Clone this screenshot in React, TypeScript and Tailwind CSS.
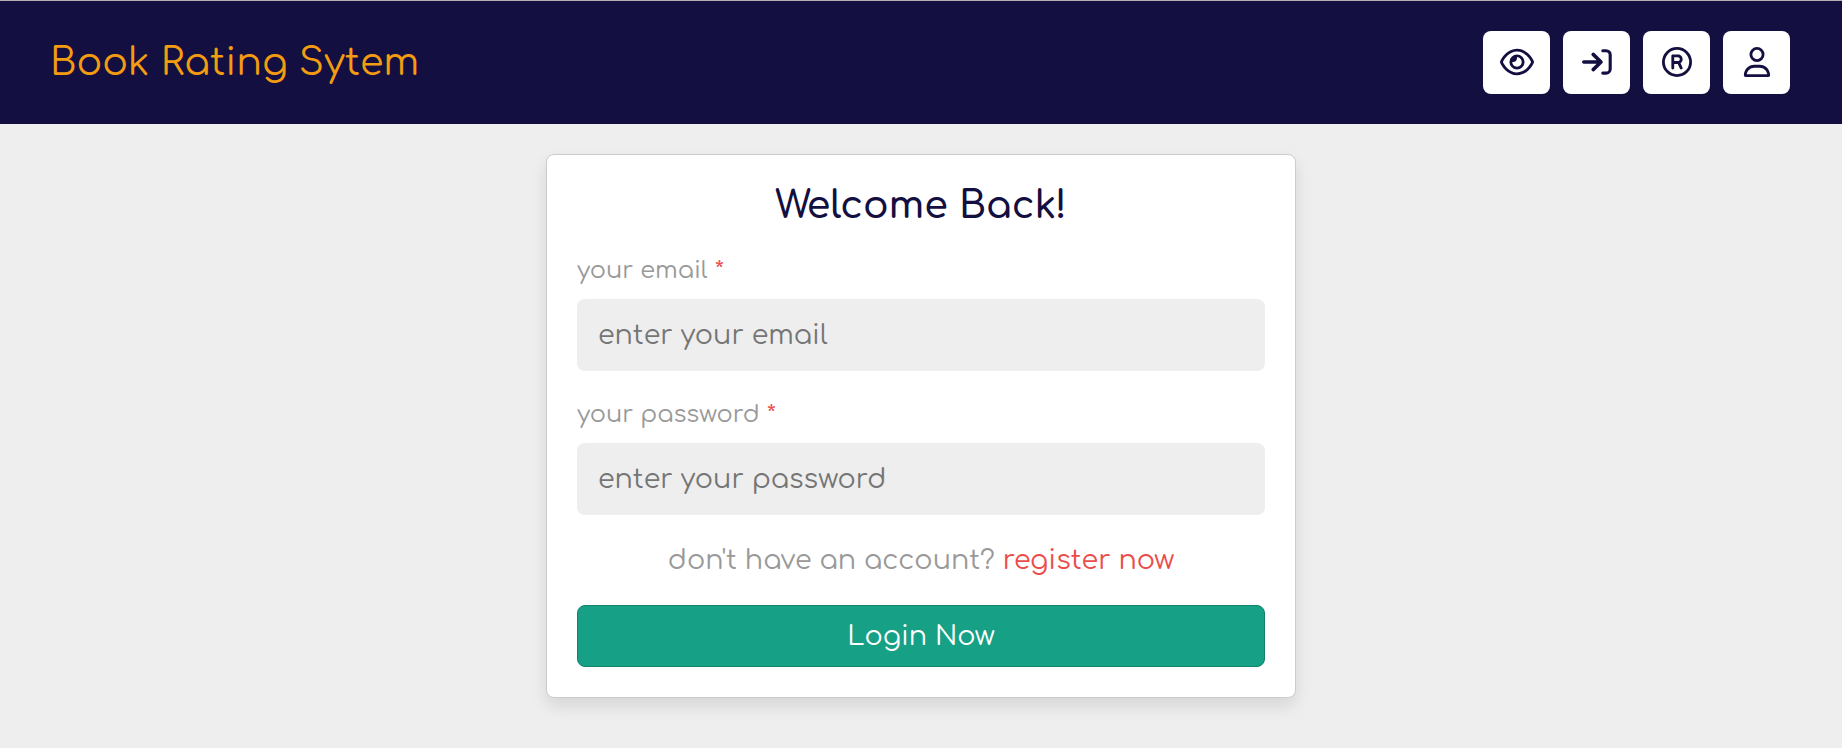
import { FaRegEye, FaRegRegistered, FaRegUser } from "react-icons/fa6";
import type { ComponentProps, ReactNode } from "react";

function EnterIcon() {
  return (
    <svg width="30" height="30" viewBox="0 0 30 30" fill="none" stroke="currentColor" strokeLinecap="round" strokeLinejoin="round">
      <path strokeWidth="3.6" d="M1.8 15H19M11.2 7.4l7.8 7.6-7.8 7.6" />
      <path strokeWidth="3.1" d="M20.8 3.7H24a4.2 4.2 0 0 1 4.2 4.2v14a4.2 4.2 0 0 1-4.2 4.2h-3.2" />
    </svg>
  );
}

function NavLink({ label, children }: { label: string; children: ReactNode }) {
  return (
    <a
      href="#"
      aria-label={label}
      className="flex h-[63px] w-[67px] items-center justify-center rounded-lg bg-white pb-0.5 text-[30px] text-[#130f40]"
    >
      {children}
    </a>
  );
}

function Field({ label, id, ...rest }: { label: string } & ComponentProps<"input">) {
  return (
    <div className="flex flex-col gap-3">
      <label htmlFor={id} className="text-[24px] leading-8 text-[#999999]">
        {label} <span className="text-[#eb4d4b]">*</span>
      </label>
      <input
        id={id}
        className="h-18 w-full rounded-lg bg-[#eeeeee] px-[21px] text-[27px] text-[#130f40] outline-none placeholder:text-[#757575]"
        {...rest}
      />
    </div>
  );
}

export default function App() {
  return (
    <div className="min-h-screen bg-[#eeeeee] font-['Comfortaa','Lato',sans-serif]">
      <header className="flex items-center justify-between border-t border-[#b5aeb0] bg-[#130f40] py-[30px] pr-[52px] pl-[50px]">
        <a href="#" className="text-[38px] leading-12 text-[#f39c12]">
          Book Rating Sytem
        </a>
        <nav className="flex gap-[13px]">
          <NavLink label="View">
            <FaRegEye className="size-[34px]" />
          </NavLink>
          <NavLink label="Login">
            <EnterIcon />
          </NavLink>
          <NavLink label="Register">
            <FaRegRegistered />
          </NavLink>
          <NavLink label="Profile">
            <FaRegUser />
          </NavLink>
        </nav>
      </header>
      <main className="px-6 py-[30px]">
        <form
          onSubmit={(e) => e.preventDefault()}
          className="mx-auto w-full max-w-[750px] rounded-lg border border-[#cccccc] bg-white px-[30px] pt-[26px] pb-[30px] shadow-[0_8px_16px_rgba(0,0,0,0.1)]"
        >
          <h1 className="text-center text-[38px] leading-[50px] font-semibold text-[#130f40]">Welcome Back!</h1>
          <div className="mt-6 flex flex-col gap-7">
            <Field id="email" label="your email" type="email" placeholder="enter your email" />
            <Field id="password" label="your password" type="password" placeholder="enter your password" />
          </div>
          <p className="my-7 text-center text-[27px] leading-[34px] text-[#999999]">
            don't have an account?{" "}
            <a href="#" className="text-[#eb4d4b]">
              register now
            </a>
          </p>
          <button
            type="submit"
            className="h-[62px] w-full rounded-lg border border-[#15826a] bg-[#16a085] text-[27px] text-white"
          >
            Login Now
          </button>
        </form>
      </main>
    </div>
  );
}
